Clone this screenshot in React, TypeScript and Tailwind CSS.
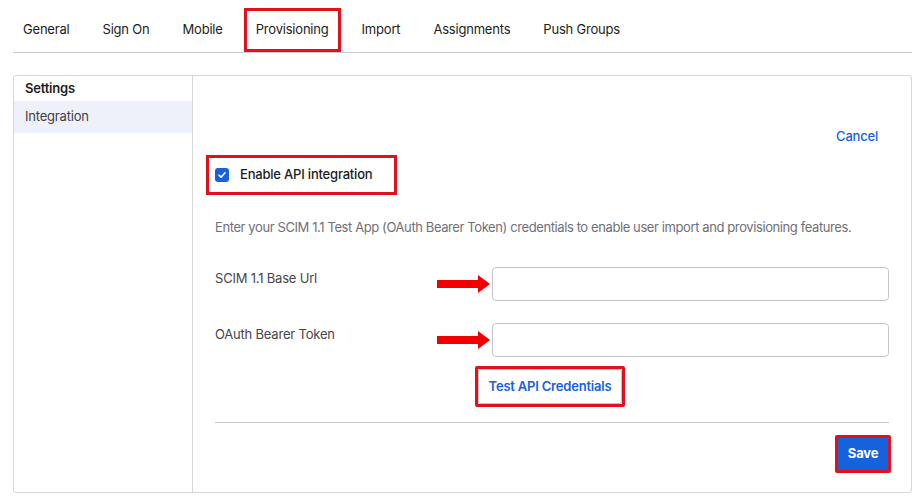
import React from 'react';

const tabs = ['General', 'Sign On', 'Mobile', 'Provisioning', 'Import', 'Assignments', 'Push Groups'];

function Arrow() {
  return (
    <svg width="54" height="20" viewBox="0 0 54 20">
      <path d="M0 6 H41 V1 L53 10 L41 19 V14 H0 Z" fill="#f00000" />
    </svg>
  );
}

function Field({ label }: { label: string }) {
  return (
    <div className="flex items-start">
      <div className="w-[221px] pt-[2px] text-[13px] text-[#46464c]">{label}</div>
      <div className="w-[56px] h-[33px] flex items-center pl-[1px]">
        <Arrow />
      </div>
      <input className="w-[397px] h-[34px] rounded-[4px] border border-[#c4c4c8] bg-white px-2 outline-none" />
    </div>
  );
}

export default function App() {
  return (
    <div className="min-h-[500px] bg-white pl-[13px] pr-[5px] text-[13px] tracking-[-0.2px]" style={{ fontFamily: 'Inter, "Noto Sans", sans-serif' }}>
      {/* Tabs */}
      <div className="flex items-start gap-[9px] pt-[8px] border-b border-[#c9c9cd]">
        {tabs.map(t => (
          <div key={t}
            className={`h-[44px] flex items-center text-[13px] text-[#1d1d21] border-[3px] px-[9px] ${t === 'Provisioning'
              ? 'border-[#e0101c]'
              : 'border-transparent'} ${t === 'General' ? '-ml-[2px]' : ''}`}>
            {t}
          </div>
        ))}
      </div>

      {/* Panel */}
      <div className="mt-[22px] h-[418px] flex border border-[#d6d6da] rounded-[3px]">
        <div className="w-[180px] border-r border-[#d6d6da]">
          <div className="h-[25px] flex items-center pl-[11px] font-semibold text-[#1d1d21]">Settings</div>
          <div className="h-[32px] flex items-center pl-[11px] bg-[#eff1fa] text-[#3d3d42]">Integration</div>
        </div>

        <div className="flex-1 pl-[22px] pr-[22px] pt-[51px] flex flex-col">
          <div className="h-[20px] flex items-center justify-end pr-[11px]">
            <span className="text-[#1662dd] font-medium">Cancel</span>
          </div>

          <div className="mt-[8px] -ml-[9px] w-[191px] h-[40px] shrink-0 border-[3px] border-[#e0101c] flex items-center pl-[6px] gap-[11px]">
            <span className="w-[14px] h-[14px] rounded-[3px] bg-[#1662dd] flex items-center justify-center">
              <svg width="10" height="10" viewBox="0 0 10 10">
                <path d="M2 5.2 L4.1 7.2 L8 2.8" stroke="white" strokeWidth="1.6" fill="none" strokeLinecap="round" strokeLinejoin="round" />
              </svg>
            </span>
            <span className="font-medium text-[#1d1d21]">Enable API integration</span>
          </div>

          <p className="mt-[22px] leading-[20px] text-[#707078] tracking-[-0.4px] whitespace-nowrap">
            Enter your SCIM 1.1 Test App (OAuth Bearer Token) credentials to enable user import and provisioning features.
          </p>

          <div className="mt-[30px]">
            <Field label="SCIM 1.1 Base Url" />
          </div>
          <div className="mt-[22px]">
            <Field label="OAuth Bearer Token" />
          </div>

          <div className="mt-[9px] ml-[260px] w-[150px] h-[41px] shrink-0 border-[3px] border-[#e0101c] rounded-[2px]">
            <div className="h-full flex items-center justify-center border border-[#c4c4c8] rounded-[2px] bg-white text-[#1662dd] font-semibold">
              Test API Credentials
            </div>
          </div>

          <div className="mt-[15px] border-t border-[#c9c9cd]" />

          <div className="mt-[12px] flex justify-end -mr-[2px]">
            <div className="w-[56px] h-[38px] border-[3px] border-[#e0101c] rounded-[2px] bg-[#1662dd] flex items-center justify-center text-white font-bold">
              Save
            </div>
          </div>
        </div>
      </div>
    </div>
  );
}
